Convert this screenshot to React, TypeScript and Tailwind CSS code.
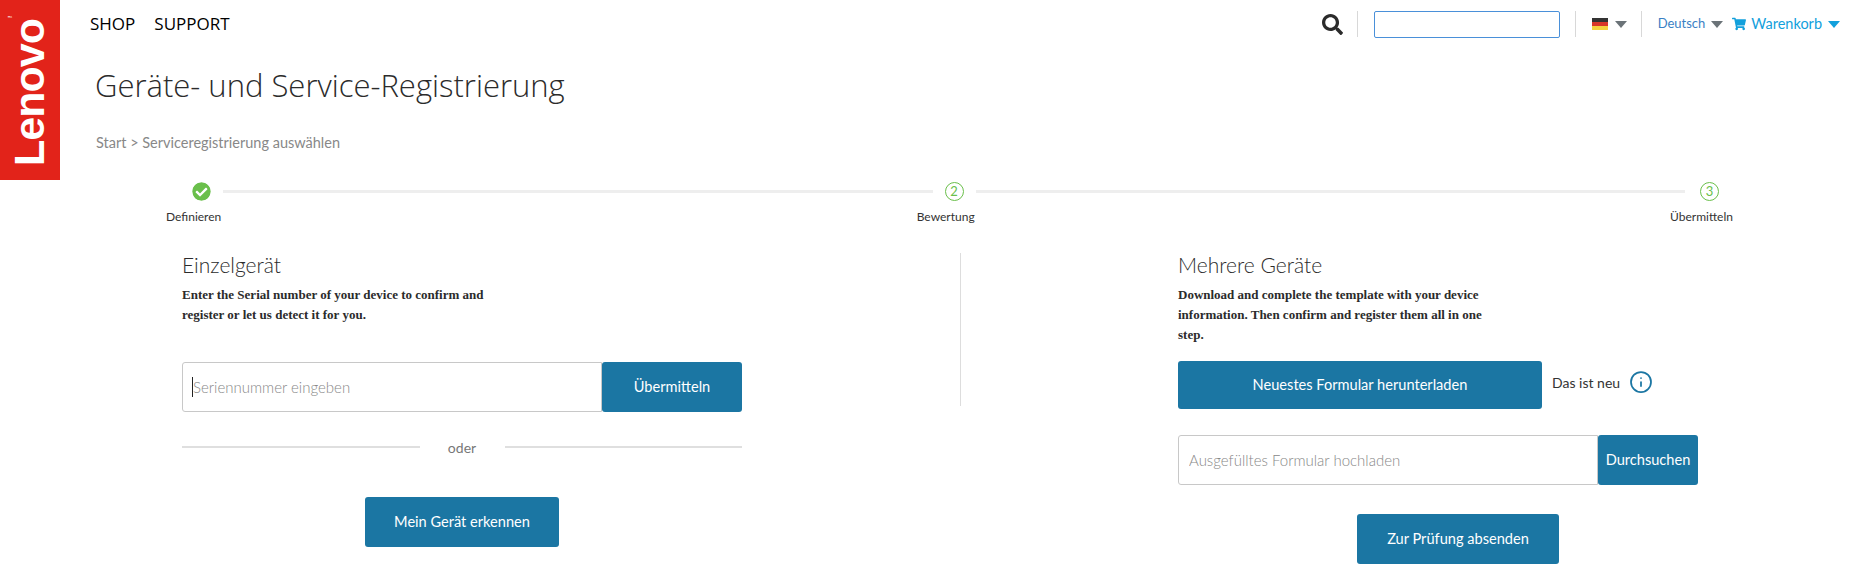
import { FaCheckCircle, FaSearch, FaShoppingCart } from 'react-icons/fa';
import { Info } from 'lucide-react';

function Caret({ className }: { className: string }) {
  return <span className={`inline-block w-0 h-0 border-x-[6.5px] border-x-transparent border-t-[7px] ${className}`} />;
}

function Separator({ className = '' }: { className?: string }) {
  return <div className={`w-px h-[26px] bg-[#d8d8d8] ${className}`} />;
}

function Button({ label, className = '' }: { label: string; className?: string }) {
  return (
    <button className={`bg-[#1b76a3] text-white text-[14.6px] rounded-[3px] flex items-center justify-center ${className}`}>
      {label}
    </button>
  );
}

function StepNumber({ n }: { n: number }) {
  return (
    <div className="w-[19px] h-[19px] rounded-full border border-[#6abf4b] text-[#6abf4b] text-[13px] leading-none flex items-center justify-center">
      {n}
    </div>
  );
}

function Header() {
  return (
    <header className="h-[48px] flex items-center justify-between pl-[30px] pr-[22px]">
      <nav className="flex gap-[19px] text-[17px] text-black font-['Open_Sans',sans-serif]">
        <a>SHOP</a>
        <a>SUPPORT</a>
      </nav>
      <div className="flex items-center">
        <FaSearch className="w-[21px] h-[21px] text-[#2b2b2b]" />
        <Separator className="ml-[14px]" />
        <input className="ml-[16px] w-[186px] h-[27px] border border-[#4a90d9] rounded-[2px] outline-none" />
        <Separator className="ml-[15px]" />
        <div className="ml-[16px] w-[16px] h-[12px] flex flex-col">
          <div className="flex-1 bg-[#333333]" />
          <div className="flex-1 bg-[#d8372a]" />
          <div className="flex-1 bg-[#f5d33f]" />
        </div>
        <Caret className="ml-[7px] border-t-[#6b7378]" />
        <Separator className="ml-[14px]" />
        <span className="ml-[16px] text-[13px] text-[#3a7fc4]">Deutsch</span>
        <Caret className="ml-[6px] border-t-[#6b7378]" />
        <FaShoppingCart className="ml-[9px] w-[14px] h-[14px] text-[#12a0dc]" />
        <span className="ml-[5px] text-[14.5px] text-[#12a0dc]">Warenkorb</span>
        <Caret className="ml-[6px] border-t-[#12a0dc]" />
      </div>
    </header>
  );
}

function Stepper() {
  return (
    <div className="mt-[28px] pl-[106px] pr-[129px]">
      <div className="flex items-center gap-3 pl-[26px] pr-[14px]">
        <FaCheckCircle className="w-[19px] h-[19px] text-[#6abf4b] bg-white rounded-full" />
        <div className="flex-1 h-[3px] bg-[#eeeeee]" />
        <StepNumber n={2} />
        <div className="flex-1 h-[3px] mr-[3px] bg-[#eeeeee]" />
        <StepNumber n={3} />
      </div>
      <div className="mt-[7px] flex justify-between text-[12px] text-[#333333]">
        <span>Definieren</span>
        <span>Bewertung</span>
        <span>Übermitteln</span>
      </div>
    </div>
  );
}

function SingleDevice() {
  return (
    <section className="w-[778px] pr-[218px]">
      <h2 className="text-[21px] leading-[24px] font-light text-[#2b2b2b]">Einzelgerät</h2>
      <p className="mt-[8px] w-[320px] font-['Liberation_Serif',serif] font-bold text-[13px] leading-[20px] text-[#2b2b2b]">
        Enter the Serial number of your device to confirm and register or let us detect it for you.
      </p>
      <div className="mt-[37px] flex h-[50px]">
        <div className="relative flex-1">
          <input
            placeholder="Seriennummer eingeben"
            className="w-full h-full border border-[#c8c8c8] rounded-l-[3px] pl-[10px] text-[15px] font-light outline-none placeholder:text-[#888888]"
          />
          <span className="absolute left-[10px] top-[15px] w-px h-[20px] bg-[#222222]" />
        </div>
        <Button label="Übermitteln" className="w-[140px]" />
      </div>
      <div className="mt-[25px] flex items-center text-[14px] text-[#777777]">
        <div className="flex-1 h-[2px] bg-[#dfdfdf]" />
        <span className="w-[85px] text-center">oder</span>
        <div className="flex-1 h-[2px] bg-[#dfdfdf]" />
      </div>
      <Button label="Mein Gerät erkennen" className="mt-[39px] mx-auto w-[194px] h-[50px]" />
    </section>
  );
}

function MultipleDevices() {
  return (
    <section className="ml-[217px] w-[560px]">
      <h2 className="text-[21px] leading-[24px] font-light text-[#2b2b2b]">Mehrere Geräte</h2>
      <p className="mt-[8px] w-[320px] font-['Liberation_Serif',serif] font-bold text-[13px] leading-[20px] text-[#2b2b2b]">
        Download and complete the template with your device information. Then confirm and register them all in one step.
      </p>
      <div className="mt-[16px] flex items-center">
        <Button label="Neuestes Formular herunterladen" className="w-[364px] h-[48px]" />
        <div className="ml-[10px] mb-[5px] flex items-center">
          <span className="text-[14px] text-[#333333]">Das ist neu</span>
          <Info className="ml-[9px] w-[24px] h-[24px] text-[#1b76a3]" strokeWidth={1.75} />
        </div>
      </div>
      <div className="mt-[26px] flex h-[50px] w-[520px]">
        <input
          placeholder="Ausgefülltes Formular hochladen"
          className="flex-1 border border-[#c8c8c8] rounded-l-[3px] pl-[10px] text-[15px] font-light outline-none placeholder:text-[#888888]"
        />
        <Button label="Durchsuchen" className="w-[100px]" />
      </div>
      <Button label="Zur Prüfung absenden" className="mt-[29px] mx-auto w-[202px] h-[50px]" />
    </section>
  );
}

export default function App() {
  return (
    <div className="flex bg-white font-['Lato',sans-serif] text-[#333333] h-[581px] overflow-hidden">
      <aside className="w-[60px] h-[180px] shrink-0 bg-[#e2231a] flex items-center justify-center">
        <span className="[writing-mode:vertical-rl] rotate-180 text-white font-['Liberation_Sans',sans-serif] font-bold text-[43px] leading-none tracking-[-1px] -ml-[2px] -mt-[2px]">
          Lenovo<span className="text-[5px] tracking-normal align-top">™</span>
        </span>
      </aside>
      <main className="flex-1 min-w-0">
        <Header />
        <h1 className="mt-[16px] ml-[35px] text-[31px] leading-[42px] font-light text-[#2b2b2b] font-['Open_Sans',sans-serif]">
          Geräte- und Service-Registrierung
        </h1>
        <div className="mt-[26px] ml-[36px] text-[14.5px] text-[#888888]">Start &gt; Serviceregistrierung auswählen</div>
        <Stepper />
        <div className="mt-[27px] ml-[122px] flex items-start">
          <SingleDevice />
          <div className="w-px h-[153px] bg-[#dddddd]" />
          <MultipleDevices />
        </div>
      </main>
    </div>
  );
}
